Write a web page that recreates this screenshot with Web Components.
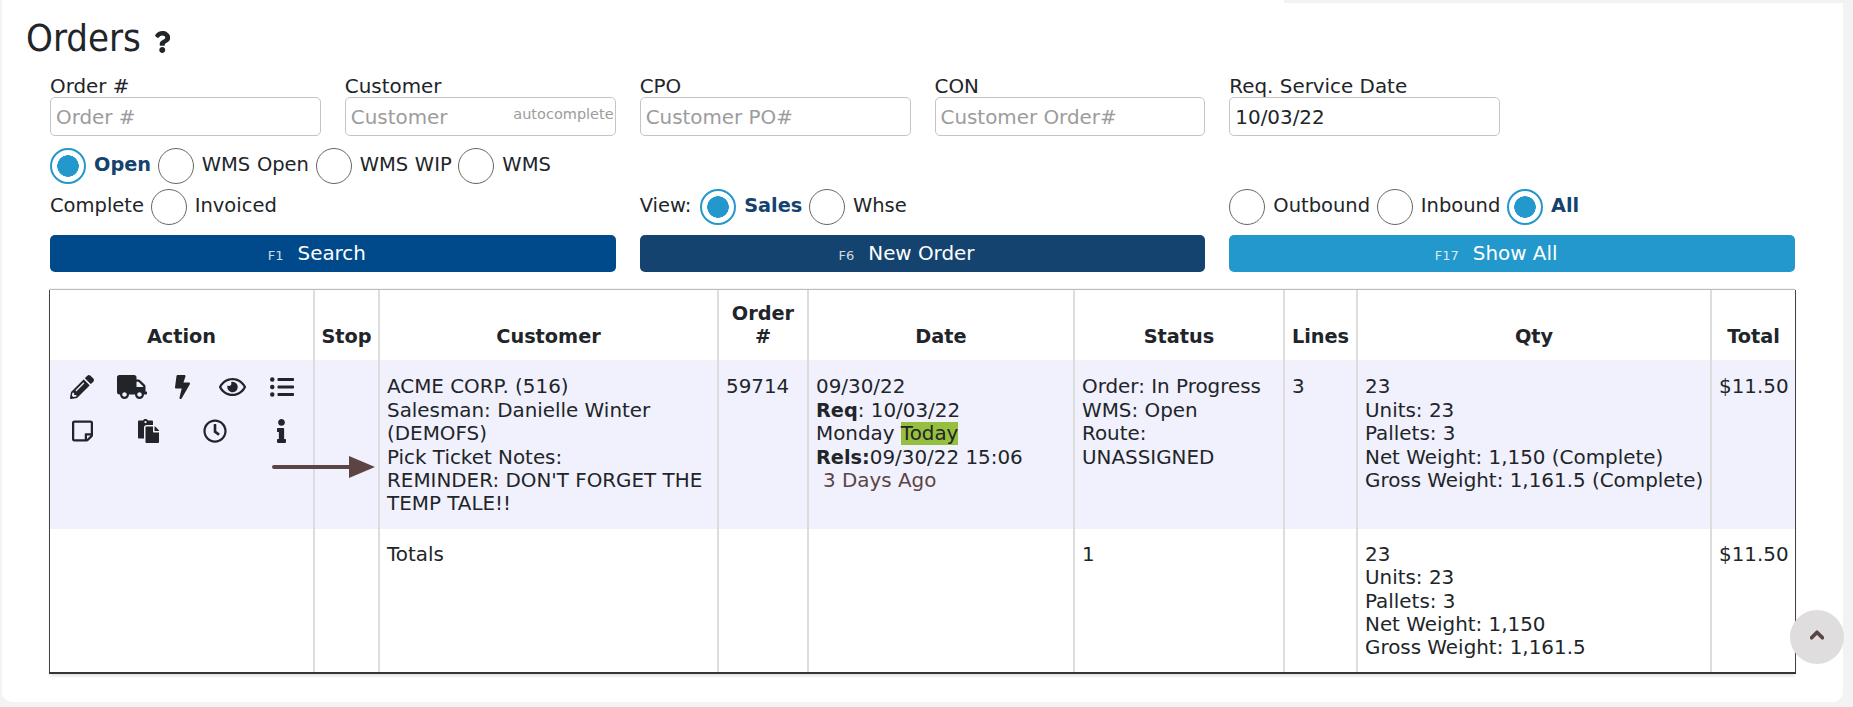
<!DOCTYPE html>
<html lang="en">
<head>
<meta charset="utf-8">
<title>Orders</title>
<style>
    html, body { margin: 0; height: 707px; overflow: hidden; background: #f4f3f3; }
    body { font-family: "DejaVu Sans", Verdana, sans-serif; font-size: 19.9px; color: #212529; }
</style>
</head>
<body>

<orders-page>
    <orders-title>Orders</orders-title>
    <orders-form>
        <form-field label="Order #" placeholder="Order #"></form-field>
        <form-field label="Customer" placeholder="Customer" hint="autocomplete"></form-field>
        <form-field label="CPO" placeholder="Customer PO#"></form-field>
        <form-field label="CON" placeholder="Customer Order#"></form-field>
        <form-field label="Req. Service Date" value="10/03/22"></form-field>
        <span></span>

        <radio-group>
            <radio-opt checked>Open</radio-opt>
            <radio-opt>WMS Open</radio-opt>
            <radio-opt>WMS WIP</radio-opt>
            <radio-opt><span>WMS</span> <span>Complete</span></radio-opt>
            <radio-opt>Invoiced</radio-opt>
        </radio-group>
        <radio-group>
            <span style="margin-right:2px">View:</span>
            <radio-opt checked>Sales</radio-opt>
            <radio-opt>Whse</radio-opt>
        </radio-group>
        <radio-group>
            <radio-opt>Outbound</radio-opt>
            <radio-opt>Inbound</radio-opt>
            <radio-opt checked>All</radio-opt>
        </radio-group>

        <key-button fkey="F1" color="#004a8c">Search</key-button>
        <key-button fkey="F6" color="#14436f">New Order</key-button>
        <key-button fkey="F17" color="#2398cc">Show All</key-button>
    </orders-form>
    <orders-table></orders-table>
</orders-page>
<scroll-top></scroll-top>

<script>
const ICONS = {
    pencil: [512, "M497.9 142.1l-46.1 46.1c-4.7 4.7-12.3 4.7-17 0l-111-111c-4.7-4.7-4.7-12.3 0-17l46.1-46.1c18.7-18.7 49.1-18.7 67.9 0l60.1 60.1c18.8 18.7 18.8 49.1 0 67.9zM284.2 99.8L21.6 362.4.4 483.9c-2.9 16.4 11.4 30.6 27.8 27.8l121.5-21.3 262.6-262.6c4.7-4.7 4.7-12.3 0-17l-111-111c-4.8-4.7-12.4-4.7-17.1 0zM124.1 339.9c-5.5-5.5-5.5-14.3 0-19.8l154-154c5.5-5.5 14.3-5.5 19.8 0s5.5 14.3 0 19.8l-154 154c-5.5 5.5-14.3 5.5-19.8 0zM88 424h48v36.3l-64.5 11.3-31.1-31.1L51.7 376H88v48z"],
    truck: [640, "M624 352h-16V243.9c0-12.7-5.1-24.9-14.1-33.9L494 110.1c-9-9-21.2-14.1-33.9-14.1H416V48c0-26.5-21.5-48-48-48H48C21.5 0 0 21.5 0 48v320c0 26.5 21.5 48 48 48h16c0 53 43 96 96 96s96-43 96-96h128c0 53 43 96 96 96s96-43 96-96h48c8.8 0 16-7.2 16-16v-32c0-8.8-7.2-16-16-16zM160 464c-26.5 0-48-21.5-48-48s21.5-48 48-48 48 21.5 48 48-21.5 48-48 48zm320 0c-26.5 0-48-21.5-48-48s21.5-48 48-48 48 21.5 48 48-21.5 48-48 48zm80-208H416V144h44.1l99.9 99.9V256z"],
    bolt: [320, "M296 160H180.6l42.6-129.8C227.2 15 215.7 0 200 0H56C44 0 33.8 8.9 32.2 20.8l-32 240C-1.7 275.2 9.5 288 24 288h118.7L96.6 482.5c-3.6 15.2 8 29.5 23.3 29.5 8.4 0 16.4-4.4 20.8-12l176-304c9.3-15.9-2.2-36-20.7-36z"],
    eye: [576, "M288 144a110.94 110.94 0 0 0-31.24 5 55.4 55.4 0 0 1 7.24 27 56 56 0 0 1-56 56 55.4 55.4 0 0 1-27-7.24A111.71 111.71 0 1 0 288 144zm284.52 97.4C518.29 135.59 410.93 64 288 64S57.68 135.64 3.48 241.41a32.35 32.35 0 0 0 0 29.19C57.71 376.41 165.07 448 288 448s230.32-71.64 284.52-177.41a32.35 32.35 0 0 0 0-29.19zM288 400c-98.65 0-189.09-55-237.93-144C98.91 167 189.34 112 288 112s189.09 55 237.93 144C477.1 345 386.66 400 288 400z"],
    list: [512, "M48 48a48 48 0 1 0 48 48 48 48 0 0 0-48-48zm0 160a48 48 0 1 0 48 48 48 48 0 0 0-48-48zm0 160a48 48 0 1 0 48 48 48 48 0 0 0-48-48zm448 16H176a16 16 0 0 0-16 16v32a16 16 0 0 0 16 16h320a16 16 0 0 0 16-16v-32a16 16 0 0 0-16-16zm0-320H176a16 16 0 0 0-16 16v32a16 16 0 0 0 16 16h320a16 16 0 0 0 16-16V80a16 16 0 0 0-16-16zm0 160H176a16 16 0 0 0-16 16v32a16 16 0 0 0 16 16h320a16 16 0 0 0 16-16v-32a16 16 0 0 0-16-16z"],
    note: [448, "M448 348.106V80c0-26.51-21.49-48-48-48H48C21.49 32 0 53.49 0 80v351.988c0 26.51 21.49 48 48 48h268.118a48 48 0 0 0 33.941-14.059l83.882-83.882A48 48 0 0 0 448 348.106zm-128 80v-76.118h76.118L320 428.106zM400 80v223.988H296c-13.255 0-24 10.745-24 24v104H48V80h352z"],
    paste: [448, "M128 184c0-30.879 25.122-56 56-56h136V56c0-13.255-10.745-24-24-24h-80.61C204.306 12.89 183.637 0 160 0s-44.306 12.89-55.39 32H24C10.745 32 0 42.745 0 56v336c0 13.255 10.745 24 24 24h104V184zm32-144c13.255 0 24 10.745 24 24s-10.745 24-24 24-24-10.745-24-24 10.745-24 24-24zm184 248h104v200c0 13.255-10.745 24-24 24H184c-13.255 0-24-10.745-24-24V184c0-13.255 10.745-24 24-24h136v104c0 13.2 10.8 24 24 24zm104-38.059V256h-96v-96h6.059a24 24 0 0 1 16.97 7.029l65.941 65.941a24.002 24.002 0 0 1 7.03 16.971z"],
    clock: [512, "M256 8C119 8 8 119 8 256s111 248 248 248 248-111 248-248S393 8 256 8zm0 448c-110.5 0-200-89.5-200-200S145.5 56 256 56s200 89.5 200 200-89.5 200-200 200zm61.8-104.4l-84.9-61.7c-3.1-2.3-4.9-5.9-4.9-9.7V116c0-6.6 5.4-12 12-12h32c6.6 0 12 5.4 12 12v141.7l66.8 48.6c5.4 3.9 6.5 11.4 2.6 16.8L334.6 349c-3.9 5.3-11.4 6.5-16.8 2.6z"],
    info: [192, "M20 424.229h20V279.771H20c-11.046 0-20-8.954-20-20V212c0-11.046 8.954-20 20-20h112c11.046 0 20 8.954 20 20v212.229h20c11.046 0 20 8.954 20 20V492c0 11.046-8.954 20-20 20H20c-11.046 0-20-8.954-20-20v-47.771c0-11.046 8.954-20 20-20zM96 0C56.235 0 24 32.235 24 72s32.235 72 72 72 72-32.235 72-72S135.764 0 96 0z"],
    question: [384, "M202.021 0C122.202 0 70.503 32.703 29.914 91.026c-7.363 10.58-5.093 25.086 5.178 32.874l43.138 32.709c10.373 7.865 25.132 6.026 33.253-4.148 25.049-31.381 43.63-49.449 82.757-49.449 30.764 0 68.816 19.799 68.816 49.631 0 22.552-18.617 34.134-48.993 51.164-35.423 19.86-82.299 44.576-82.299 106.405V320c0 13.255 10.745 24 24 24h72.471c13.255 0 24-10.745 24-24v-5.773c0-42.86 125.268-44.645 125.268-160.627C377.504 66.256 286.902 0 202.021 0zM192 373.459c-38.196 0-69.271 31.075-69.271 69.271 0 38.195 31.075 69.27 69.271 69.27s69.271-31.075 69.271-69.271-31.075-69.27-69.271-69.27z"],
    chevron: [448, "M240.971 130.524l194.343 194.343c9.373 9.373 9.373 24.569 0 33.941l-22.667 22.667c-9.357 9.357-24.522 9.375-33.901.04L224 227.495 69.255 381.516c-9.379 9.335-24.544 9.317-33.901-.04l-22.667-22.667c-9.373-9.373-9.373-24.569 0-33.941L207.03 130.525c9.372-9.373 24.568-9.373 33.941-.001z"]
};

function icon(name, size) {
    const [w, d] = ICONS[name];
    return `<svg xmlns="http://www.w3.org/2000/svg" viewBox="0 0 ${w} 512" width="${w / 512 * size}" height="${size}" fill="currentColor"><path d="${d}"/></svg>`;
}

class OrdersPage extends HTMLElement {
    constructor() {
        super();
        this.attachShadow({ mode: "open" }).innerHTML = `
            <style>
                :host {
                    display: block;
                    position: relative;
                    box-sizing: border-box;
                    margin: 0 10px 0 2px;
                    height: 702px;
                    padding: 12px 0 0 0;
                    background: #fff;
                    border-radius: 0 0 10px 10px;
                }
                /* page background showing above the card, next to the menu */
                .edge {
                    position: absolute;
                    left: 1282px;
                    right: -10px;
                    top: 0;
                    height: 3px;
                    background: #f3f1f2;
                }
            </style>
            <div class="edge"></div>
            <slot></slot>
        `;
    }
}

class OrdersTitle extends HTMLElement {
    constructor() {
        super();
        this.attachShadow({ mode: "open" }).innerHTML = `
            <style>
                :host {
                    display: flex;
                    align-items: center;
                    gap: 13px;
                    margin-left: 24px;
                    height: 52px;
                    font: 38px/52px "DejaVu Sans Condensed", "DejaVu Sans", sans-serif;
                    font-stretch: condensed;
                }
                svg { margin-top: 8px; }
            </style>
            <slot></slot>${icon("question", 22)}
        `;
    }
}

class OrdersForm extends HTMLElement {
    constructor() {
        super();
        this.attachShadow({ mode: "open" }).innerHTML = `
            <style>
                :host {
                    display: grid;
                    grid-template-columns: repeat(6, 1fr);
                    column-gap: 24px;
                    margin: 9px 48px 0 48px;
                }
            </style>
            <slot></slot>
        `;
    }
}

class FormField extends HTMLElement {
    constructor() {
        super();
        const ph = this.getAttribute("placeholder") || "";
        const val = this.getAttribute("value") || "";
        const hint = this.getAttribute("hint");
        this.attachShadow({ mode: "open" }).innerHTML = `
            <style>
                :host { display: block; position: relative; }
                label { display: block; height: 24px; line-height: 28px; }
                input {
                    display: block;
                    box-sizing: border-box;
                    width: 100%;
                    height: 39px;
                    padding: 2px 5px 0;
                    border: 1px solid #c4c4c4;
                    border-radius: 5px;
                    font: inherit;
                    color: inherit;
                    background: #fff;
                }
                input::placeholder { color: #9c9c9c; opacity: 1; }
                .hint {
                    position: absolute;
                    right: 2px;
                    top: 31px;
                    font-size: 14.5px;
                    line-height: 20px;
                    color: #9c9c9c;
                }
            </style>
            <label>${this.getAttribute("label")}</label>
            <input placeholder="${ph}" value="${val}">
            ${hint ? `<span class="hint">${hint}</span>` : ""}
        `;
    }
}

class RadioGroup extends HTMLElement {
    constructor() {
        super();
        this.attachShadow({ mode: "open" }).innerHTML = `
            <style>
                :host {
                    display: block;
                    grid-column: span 2;
                    align-self: end;
                    margin-top: 8px;
                    font-size: 19.5px;
                    line-height: 41px;
                    word-spacing: 0.5px;
                }
            </style>
            <slot></slot>
        `;
    }
}

class RadioOpt extends HTMLElement {
    constructor() {
        super();
        this.attachShadow({ mode: "open" }).innerHTML = `
            <style>
                :host { display: inline; }
                .dot {
                    display: inline-block;
                    box-sizing: border-box;
                    width: 36px;
                    height: 36px;
                    margin-right: 8px;
                    vertical-align: middle;
                    border-radius: 50%;
                    border: 1px solid #666;
                    background: #fff;
                }
                :host([checked]) .dot {
                    border: 2px solid #2398cc;
                    background: radial-gradient(circle, #2398cc 0 10.5px, #fff 11px);
                }
                :host([checked]) .txt { color: #14436f; font-weight: 700; font-size: 19.3px; }
            </style>
            <span class="dot"></span><span class="txt"><slot></slot></span>
        `;
    }
}

class KeyButton extends HTMLElement {
    constructor() {
        super();
        this.attachShadow({ mode: "open" }).innerHTML = `
            <style>
                :host {
                    display: flex;
                    grid-column: span 2;
                    box-sizing: border-box;
                    align-items: center;
                    justify-content: center;
                    gap: 14px;
                    height: 37px;
                    margin-top: 9px;
                    padding-right: 32px;
                    border-radius: 5px;
                    color: #fff;
                    background: ${this.getAttribute("color")};
                }
                small { font-size: 13px; margin-top: 4px; opacity: .8; }
            </style>
            <small>${this.getAttribute("fkey")}</small><slot></slot>
        `;
    }
}

class OrdersTable extends HTMLElement {
    constructor() {
        super();
        const cols = [264, 65, 339, 90, 266, 210, 73, 354, 84];
        const heads = ["Action", "Stop", "Customer", "Order #", "Date", "Status", "Lines", "Qty", "Total"];
        const actions = [["pencil", "truck", "bolt", "eye", "list"], ["note", "paste", "clock", "info"]];
        const iconRows = actions.map(r =>
            `<div class="icons">${r.map(n => `<span>${icon(n, 24)}</span>`).join("")}</div>`).join("");
        this.attachShadow({ mode: "open" }).innerHTML = `
            <style>
                :host {
                    display: block;
                    margin: 17.5px 48px 0 48px;
                    box-shadow: -1px 0 0 #4a4040, 1px 0 0 #4a4040, -1px 2px 0 #3a3333, 1px 2px 0 #3a3333, 0 -1px 1px #bbb, 0 4px 3px rgba(0, 0, 0, .12);
                }
                table {
                    width: 100%;
                    table-layout: fixed;
                    border-collapse: collapse;
                    background: #fff;
                    line-height: 23.4px;
                }
                th, td {
                    box-sizing: border-box;
                    padding: 15px 0 13px 7px;
                    border-left: 2px solid #ddd;
                    text-align: left;
                    vertical-align: top;
                }
                th:first-child, td:first-child { border-left: 0; }
                th {
                    padding: 12px 5px 12px 5px;
                    font-size: 19.3px;
                    text-align: center;
                    vertical-align: bottom;
                }
                b { font-size: 19.3px; }
                .row td { background: #f1f1fd; }
                .totals td { padding: 14px 0 12px 7px; }
                .actions { position: relative; }
                .icons {
                    display: flex;
                    justify-content: space-between;
                    width: 250px;
                    height: 44px;
                }
                .icons span { width: 50px; text-align: center; }
                .arrow { position: absolute; left: 222px; top: 96px; color: #5c4444; }
                mark { background: #96bf3f; color: inherit; }
                .ago { color: #5c4444; padding-left: 7px; }
            </style>
            <table>
                <colgroup>${cols.map(w => `<col style="width:${w}px">`).join("")}</colgroup>
                <tr>${heads.map(h => `<th>${h}</th>`).join("")}</tr>
                <tr class="row">
                    <td class="actions">
                        ${iconRows}
                        <svg class="arrow" width="104" height="22" viewBox="0 0 104 22" fill="currentColor"><rect x="0" y="9" width="80" height="4" rx="2"/><path d="M77 0l26 11-26 11z"/></svg>
                    </td>
                    <td></td>
                    <td>ACME CORP. (516)<br>Salesman: Danielle Winter (DEMOFS)<br>Pick Ticket Notes:<br>REMINDER: DON'T FORGET THE TEMP TALE!!</td>
                    <td>59714</td>
                    <td>09/30/22<br><b>Req</b>: 10/03/22<br>Monday <mark>Today</mark><br><b>Rels:</b>09/30/22 15:06<br><span class="ago">3 Days Ago</span></td>
                    <td>Order: In Progress<br>WMS: Open<br>Route:<br>UNASSIGNED</td>
                    <td>3</td>
                    <td>23<br>Units: 23<br>Pallets: 3<br>Net Weight: 1,150 (Complete)<br>Gross Weight: 1,161.5 (Complete)</td>
                    <td>$11.50</td>
                </tr>
                <tr class="totals">
                    <td></td>
                    <td></td>
                    <td>Totals</td>
                    <td></td>
                    <td></td>
                    <td>1</td>
                    <td></td>
                    <td>23<br>Units: 23<br>Pallets: 3<br>Net Weight: 1,150<br>Gross Weight: 1,161.5</td>
                    <td>$11.50</td>
                </tr>
            </table>
        `;
    }
}

class ScrollTop extends HTMLElement {
    constructor() {
        super();
        this.attachShadow({ mode: "open" }).innerHTML = `
            <style>
                :host {
                    position: fixed;
                    left: 1790px;
                    top: 610px;
                    display: flex;
                    align-items: center;
                    justify-content: center;
                    width: 54px;
                    height: 54px;
                    border-radius: 50%;
                    background: #dfdddd;
                    color: #5c4444;
                }
                svg { margin-top: -4px; stroke: currentColor; stroke-width: 40px; }
            </style>
            ${icon("chevron", 16)}
        `;
    }
}

customElements.define("orders-page", OrdersPage);
customElements.define("orders-title", OrdersTitle);
customElements.define("orders-form", OrdersForm);
customElements.define("form-field", FormField);
customElements.define("radio-group", RadioGroup);
customElements.define("radio-opt", RadioOpt);
customElements.define("key-button", KeyButton);
customElements.define("orders-table", OrdersTable);
customElements.define("scroll-top", ScrollTop);
</script>
</body>
</html>
